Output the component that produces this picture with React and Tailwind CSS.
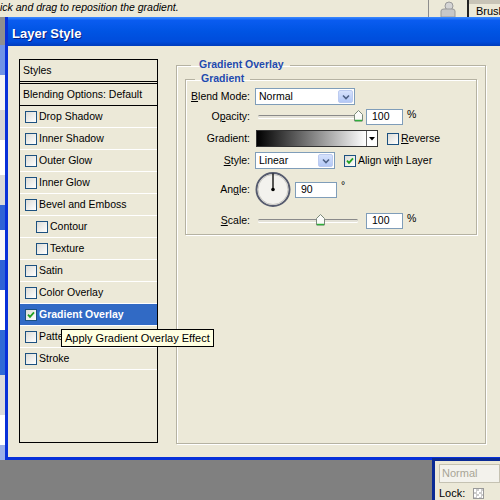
import React from "react";

const effects = [
  { name: "Drop Shadow" },
  { name: "Inner Shadow" },
  { name: "Outer Glow" },
  { name: "Inner Glow" },
  { name: "Bevel and Emboss" },
  { name: "Contour", sub: true },
  { name: "Texture", sub: true },
  { name: "Satin" },
  { name: "Color Overlay" },
  { name: "Gradient Overlay", checked: true, selected: true },
  { name: "Pattern Overlay", tip: true },
  { name: "Stroke" },
];

const edge = [
  ["h-[28px]", "bg-[#8f8f8f]"],
  ["h-[30px]", "bg-[#6f93e6]"],
  ["h-[35px]", "bg-[#f4f4f4]"],
  ["h-[30px]", "bg-[#d6d6d6]"],
  ["h-[35px]", "bg-[#ffffff]"],
  ["h-[30px]", "bg-[#d9d9d9]"],
  ["h-[25px]", "bg-[#2f63d6]"],
  ["h-[30px]", "bg-[#f8f8f8]"],
  ["h-[30px]", "bg-[#2f63d6]"],
  ["h-[40px]", "bg-[#ffffff]"],
  ["h-[45px]", "bg-[#2f6ad6]"],
  ["h-[40px]", "bg-[#dcdcdc]"],
  ["h-[30px]", "bg-[#ffffff]"],
  ["h-[15px]", "bg-[#9bb0e8]"],
];

function Check({ checked }) {
  return (
    <span className="w-[12px] h-[12px] shrink-0 border border-[#1c5180] bg-[linear-gradient(135deg,#dcdcd7,#ffffff)] flex items-center justify-center">
      {checked && (
        <svg width="8" height="8" viewBox="0 0 8 8">
          <path d="M1 3.6 L3 5.8 L7 1.4" stroke="#21a121" strokeWidth="1.8" fill="none" />
        </svg>
      )}
    </span>
  );
}

function DropButton() {
  return (
    <span className="w-[15px] h-[13px] mr-[1px] rounded-[2px] bg-[linear-gradient(180deg,#d6e2fc,#b3c8f6)] border border-[#bccbf0] flex items-center justify-center">
      <svg width="8" height="6" viewBox="0 0 8 6">
        <path d="M1 1.5 L4 4.5 L7 1.5" stroke="#4d6185" strokeWidth="1.6" fill="none" />
      </svg>
    </span>
  );
}

function Select({ value, width }) {
  return (
    <div className={`${width} h-[17px] bg-white border border-[#7f9db9] flex items-center justify-between pl-[3px]`}>
      <span>{value}</span>
      <DropButton />
    </div>
  );
}

function Thumb() {
  return (
    <svg width="9" height="12" viewBox="0 0 9 12">
      <path d="M0.5 11 V4.5 L4.5 0.5 L8.5 4.5 V11 Z" fill="#fbfbf9" stroke="#7a8a7a" />
      <path d="M1 10.5 H8" stroke="#2fae3a" strokeWidth="1.5" />
    </svg>
  );
}

function Slider({ thumb }) {
  return (
    <div className="relative w-[106px] h-[17px] flex items-center pl-[3px]">
      <div className="w-[100px] h-[3px] rounded-full border-t border-[#8a8a8a] bg-[#e4e2d8] shadow-[0_1px_0_#fff]" />
      <div className="absolute top-[2px]" style={{ left: thumb }}>
        <Thumb />
      </div>
    </div>
  );
}

function Field({ value, width = "w-[37px]" }) {
  return (
    <div className={`${width} h-[16px] bg-white border border-[#7f9db9] flex items-center pl-[5px]`}>{value}</div>
  );
}

function Row({ label, children, className = "" }) {
  return (
    <div className={`flex items-center ${className}`}>
      <div className="w-[64px] text-right shrink-0">{label}</div>
      <div className="ml-[5px] flex items-center">{children}</div>
    </div>
  );
}

export default function App() {
  return (
    <div className="w-[500px] h-[500px] overflow-hidden bg-[#ece9d8] flex flex-col font-['Liberation_Sans',Arial,sans-serif] text-[10.5px] text-black leading-none">
      {/* options bar behind the dialog */}
      <div className="h-[17px] shrink-0 flex items-stretch">
        <div className="flex-1 italic text-[10.5px] pt-[2px] whitespace-nowrap">ick and drag to reposition the gradient.</div>
        <div className="w-[39px] border-l border-[#8d8d8d] flex justify-center">
          <svg width="20" height="17" viewBox="0 0 20 17">
            <circle cx="11" cy="6" r="4" fill="#d4d4d4" stroke="#9a9a9a" />
            <path d="M3 17 V11 Q3 9 6 9 H14 Q17 9 17 11 V17 Z" fill="#c8c8c8" stroke="#9a9a9a" />
          </svg>
        </div>
        <div className="w-[33px] border-l-2 border-[#222] flex flex-col">
          <div className="h-[5px] bg-[#c8c4b7]" />
          <div className="pl-[7px] pt-[2px] text-[11px] whitespace-nowrap">Brush</div>
        </div>
      </div>

      <div className="flex h-[443px] shrink-0">
        <div className="w-[5px] shrink-0 flex flex-col">
          {edge.map(([h, c], i) => (
            <div key={i} className={`${h} ${c} shrink-0`} />
          ))}
        </div>

        {/* dialog */}
        <div className="flex-1 flex flex-col border-l-[3px] border-b-[3px] border-[#0831d9]">
          <div className="h-[29px] shrink-0 flex items-center pl-[4px] pt-[3px] bg-[linear-gradient(180deg,#3d8bff_0%,#0a5cf0_12%,#0054e3_50%,#004cdb_85%,#003cbc_100%)]">
            <span className="text-white font-bold text-[13px] [text-shadow:1px_1px_0_#0a1e80]">Layer Style</span>
          </div>

          <div className="flex-1 flex items-start pl-[11px] pt-[13px]">
            {/* styles list */}
            <div className="relative w-[139px] h-[384px] border border-black flex flex-col">
              <div className="h-[21px] flex items-center pl-[3px]">Styles</div>
              <div className="h-[3px] border-y border-black" />
              <div className="h-[22px] flex items-center pl-[3px] border-b border-black">Blending Options: Default</div>
              {effects.map((e) => (
                <div
                  key={e.name}
                  className={`h-[22px] flex items-center gap-[2px] border-b border-white ${e.sub ? "pl-[16px]" : "pl-[5px]"} ${e.selected ? "bg-[#316ac5] text-white font-bold" : ""}`}
                >
                  <Check checked={e.checked} />
                  <span className="whitespace-nowrap">{e.name}</span>
                </div>
              ))}
              <div className="absolute left-[41px] top-[269px] h-[18px] px-[3px] bg-[#ffffe1] border border-black text-[11px] flex items-center whitespace-nowrap">
                Apply Gradient Overlay Effect
              </div>
            </div>

            {/* settings */}
            <fieldset className="ml-[18px] w-[310px] h-[385px] border border-[#b5b2a2] shadow-[1px_1px_0_#fff,inset_1px_1px_0_#fff] px-[8px]">
              <legend className="ml-[6px] pl-[8px] pr-[6px] h-[13px] font-bold text-[#1f4aad]">Gradient Overlay</legend>
              <fieldset className="h-[162px] mt-[1px] border border-[#b5b2a2] shadow-[1px_1px_0_#fff,inset_1px_1px_0_#fff] pt-[2px]">
                <legend className="ml-[9px] px-[6px] h-[13px] font-bold text-[#1f4aad]">Gradient</legend>

                <Row label={<><u>B</u>lend Mode:</>}>
                  <Select value="Normal" width="w-[100px]" />
                </Row>

                <Row label={<>O<u>p</u>acity:</>} className="mt-[3px]">
                  <Slider thumb={99} />
                  <div className="ml-[5px]"><Field value="100" /></div>
                  <span className="ml-[4px] -mt-[4px]">%</span>
                </Row>

                <Row label="Gradient:" className="mt-[5px]">
                  <div className="ml-[1px] w-[122px] h-[17px] border border-[#333] flex">
                    <div className="flex-1 bg-[linear-gradient(90deg,#000,#fff)]" />
                    <div className="w-[11px] border-l border-[#666] bg-white flex items-center justify-center">
                      <svg width="6" height="4" viewBox="0 0 6 4"><path d="M0 0 H6 L3 3.5 Z" fill="#000" /></svg>
                    </div>
                  </div>
                  <div className="ml-[9px] flex items-center gap-[2px]">
                    <Check />
                    <span><u>R</u>everse</span>
                  </div>
                </Row>

                <Row label={<><u>S</u>tyle:</>} className="mt-[5px]">
                  <Select value="Linear" width="w-[80px]" />
                  <div className="ml-[9px] flex items-center gap-[2px]">
                    <Check checked />
                    <span>Align wi<u>t</u>h Layer</span>
                  </div>
                </Row>

                <Row label={<>An<u>g</u>le:</>} className="mt-[2px]">
                  <svg width="36" height="37" viewBox="0 0 36 37">
                    <circle cx="18" cy="18.5" r="16.5" fill="#f3f2ee" stroke="#565b6e" strokeWidth="2" />
                    <circle cx="18" cy="18.5" r="15" fill="none" stroke="#c9c8c2" strokeWidth="1" />
                    <path d="M18 18.5 V2.5" stroke="#000" strokeWidth="1.3" />
                    <circle cx="18" cy="18.5" r="1.8" fill="#000" />
                  </svg>
                  <div className="ml-[4px]"><Field value="90" width="w-[42px]" /></div>
                  <span className="ml-[4px] -mt-[8px]">°</span>
                </Row>

                <Row label={<><u>S</u>cale:</>} className="mt-[4px]">
                  <Slider thumb={61} />
                  <div className="ml-[5px]"><Field value="100" /></div>
                  <span className="ml-[4px] -mt-[4px]">%</span>
                </Row>
              </fieldset>
            </fieldset>
          </div>
        </div>
      </div>

      {/* desktop below */}
      <div className="flex-1 flex bg-[#808080]">
        <div className="flex-1" />
        <div className="w-[68px] -mt-[2px] border-l-[3px] border-t-[3px] border-[#0a2a94] bg-[#ece9d8] flex flex-col pl-[4px] pt-[3px]">
          <div className="h-[19px] border border-[#c5c2b2] bg-[#f3f2ec] text-[#a8a596] text-[11px] flex items-center pl-[2px]">Normal</div>
          <div className="mt-[5px] flex items-center gap-[8px] text-[11px]">
            <span>Lock:</span>
            <span className="w-[11px] h-[11px] border border-[#999] bg-[conic-gradient(#ccc_25%,#fff_0_50%,#ccc_0_75%,#fff_0)] bg-[length:5px_5px]" />
          </div>
        </div>
      </div>
    </div>
  );
}
